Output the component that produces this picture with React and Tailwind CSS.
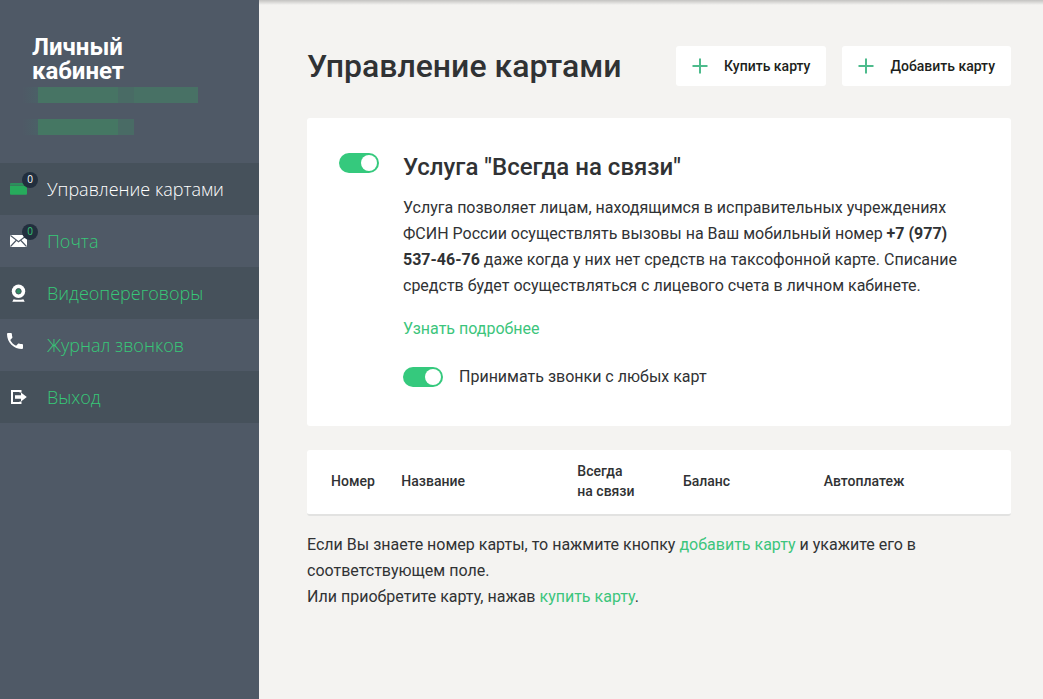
import React, { useState } from "react";

function CardIcon() {
  return (
    <svg viewBox="0 0 18 14" className="block h-[14px] w-[18px]" aria-hidden="true">
      <path d="M1 1h16v2H0V2a1 1 0 0 1 1-1z" fill="#2c8f5c" />
      <path d="M0 3.500h17v8.300a1 1 0 0 1-1 1H1a1 1 0 0 1-1-1z" fill="#27ab5c" />
    </svg>
  );
}

function MailIcon() {
  return (
    <svg viewBox="0 0 18 14" className="block h-[14px] w-[18px]" aria-hidden="true">
      <rect x="0" y="1" width="17" height="12" rx="0.800" fill="#fff" />
      <path d="M0.500 1.500l8 6.300 8-6.300M0.500 12.500l5.600-6M16.500 12.500l-5.600-6" fill="none" stroke="#4c5764" strokeWidth="1.100" />
    </svg>
  );
}

function WebcamIcon() {
  return (
    <svg viewBox="0 0 18 18" className="block size-[18px]" aria-hidden="true">
      <circle cx="8.500" cy="7.300" r="6.700" fill="#fff" />
      <circle cx="8.500" cy="7.300" r="2.700" fill="#2f8d63" stroke="#46515b" strokeWidth="1" />
      <path d="M3.600 15.200q4.900 1 9.800 0l1.300 2.500H2.300z" fill="#fff" />
    </svg>
  );
}

function PhoneIcon() {
  return (
    <svg viewBox="3 3 18 18" className="block size-[16px]" aria-hidden="true">
      <path
        d="M6.620 10.790c1.440 2.830 3.760 5.140 6.590 6.590l2.200-2.200c.27-.27.67-.36 1.020-.24 1.120.37 2.330.57 3.570.57.55 0 1 .45 1 1V20c0 .55-.45 1-1 1-9.390 0-17-7.610-17-17 0-.55.45-1 1-1h3.500c.55 0 1 .45 1 1 0 1.250.2 2.450.57 3.570.11.35.03.74-.25 1.020l-2.200 2.200z"
        fill="#fff"
      />
    </svg>
  );
}

function ExitIcon() {
  return (
    <svg viewBox="0 0 18 16" className="block h-[16px] w-[18px]" aria-hidden="true">
      <path d="M10.500 3.500V2H2v12h8.500v-1.500" fill="none" stroke="#fff" strokeWidth="2" />
      <path d="M5 6.200h6V3.500L16.800 8 11 12.500V9.800H5z" fill="#fff" />
    </svg>
  );
}

function PlusIcon() {
  return (
    <svg viewBox="0 0 16 16" className="block size-4 shrink-0" aria-hidden="true">
      <path d="M8 0.500v15M0.500 8h15" stroke="#4dbb8c" strokeWidth="2" />
    </svg>
  );
}

const menu = [
  { label: "Управление картами", icon: CardIcon, count: 0, active: true },
  { label: "Почта", icon: MailIcon, count: 0 },
  { label: "Видеопереговоры", icon: WebcamIcon },
  { label: "Журнал звонков", icon: PhoneIcon, raised: true },
  { label: "Выход", icon: ExitIcon },
];

function MenuItem({ label, icon: Icon, count, active, raised }) {
  return (
    <li className="odd:bg-[#46515b] even:bg-[#4f5966]">
      <a
        href="#"
        className={`flex h-[52px] items-center font-['Open_Sans',sans-serif] text-lg font-light ${active ? "text-white" : "text-[#37c878]"}`}
      >
        <span className={`relative flex w-[47px] shrink-0 ${raised ? "pb-2 pl-[7px]" : "pl-[10px]"}`}>
          <Icon />
          {count !== undefined && (
            <span className="absolute -top-[10px] left-[22px] flex size-4 items-center justify-center rounded-full bg-[#222f3e] text-[10px] font-normal">
              {count}
            </span>
          )}
        </span>
        {label}
      </a>
    </li>
  );
}

function Toggle({ id, label }) {
  const [on, setOn] = useState(true);
  return (
    <span className="relative block h-5 w-10 shrink-0">
      <input
        id={id}
        type="checkbox"
        aria-label={label}
        checked={on}
        onChange={(e) => setOn(e.target.checked)}
        className="peer block h-5 w-10 cursor-pointer appearance-none rounded-full bg-[#b8bcc0] checked:bg-[#35c97d]"
      />
      <span className="pointer-events-none absolute left-0.5 top-0.5 size-4 rounded-full bg-white peer-checked:left-[22px]" />
    </span>
  );
}

function ActionButton({ children }) {
  return (
    <button
      type="button"
      className="flex h-10 cursor-pointer items-center gap-4 whitespace-nowrap rounded-[3px] bg-white px-4 text-sm font-medium text-[#1d1f20]"
    >
      <PlusIcon />
      {children}
    </button>
  );
}

export default function App() {
  return (
    <div className="relative flex min-h-screen bg-[#f4f3f1] font-[Roboto,sans-serif] text-base leading-[26px] text-[#303234]">
      <div className="pointer-events-none absolute left-[259px] right-0 top-0 h-[5px] bg-linear-to-b from-black/20 to-transparent" />
      <aside className="w-[259px] shrink-0 bg-[#4f5966]">
        <div className="h-[163px] px-8 pt-[35px]">
          <p className="w-28 text-2xl font-bold leading-6 text-white">Личный кабинет</p>
          <div className="-ml-[10px] mt-1 flex h-4">
            <div className="w-4 bg-linear-to-r from-[#4f5966] to-[#4b6067]" />
            <div className="w-20 bg-[#477464]" />
            <div className="w-4 bg-[#496b65]" />
            <div className="w-16 bg-[#487165]" />
          </div>
          <div className="-ml-[10px] mt-4 flex h-4">
            <div className="w-4 bg-linear-to-r from-[#4f5966] to-[#4b6067]" />
            <div className="w-20 bg-[#457763]" />
            <div className="w-4 bg-[#496b65]" />
          </div>
        </div>
        <nav>
          <ul>
            {menu.map((item) => (
              <MenuItem key={item.label} {...item} />
            ))}
          </ul>
        </nav>
      </aside>

      <main className="min-w-0 flex-1 pl-12 pr-8 pt-[46px]">
        <header className="flex items-center justify-between">
          <h1 className="whitespace-nowrap text-[32px] font-medium leading-10">Управление картами</h1>
          <div className="flex gap-4">
            <ActionButton>Купить карту</ActionButton>
            <ActionButton>Добавить карту</ActionButton>
          </div>
        </header>

        <section className="mt-8 flex gap-6 rounded-[3px] bg-white px-8 pb-9 pt-[35px]">
          <Toggle id="always" label="Услуга &quot;Всегда на связи&quot;" />
          <div className="min-w-0 flex-1">
            <h2 className="text-2xl font-medium leading-7">Услуга "Всегда на связи"</h2>
            <p className="mt-[14px] max-w-[560px]">
              Услуга позволяет лицам, находящимся в исправительных учреждениях ФСИН России осуществлять
              вызовы на Ваш мобильный номер <strong className="font-bold">+7 (977) 537-46-76</strong> даже
              когда у них нет средств на таксофонной карте. Списание средств будет осуществляться с
              лицевого счета в личном кабинете.
            </p>
            <p className="mt-[17px]">
              <a href="#" className="text-[#3cc57c]">Узнать подробнее</a>
            </p>
            <div className="mt-[22px] flex items-center gap-4">
              <Toggle id="any" />
              <label htmlFor="any">Принимать звонки с любых карт</label>
            </div>
          </div>
        </section>

        <table className="mt-6 w-full table-fixed border-separate border-spacing-0 text-left text-sm leading-5">
          <thead>
            <tr className="*:h-[66px] *:border-b-2 *:border-[#e2e2e1] *:bg-white *:pb-0.5 *:font-medium">
              <th scope="col" className="w-[13.4%] rounded-l-[3px] pl-6">Номер</th>
              <th scope="col" className="w-[25%]">Название</th>
              <th scope="col" className="w-[15%]">Всегда<br />на связи</th>
              <th scope="col" className="w-[20%]">Баланс</th>
              <th scope="col" className="rounded-r-[3px]">Автоплатеж</th>
            </tr>
          </thead>
        </table>

        <p className="mt-4 max-w-[640px]">
          Если Вы знаете номер карты, то нажмите кнопку{" "}
          <a href="#" className="text-[#3cc57c]">добавить карту</a> и укажите его в соответствующем поле.
          <br />
          Или приобретите карту, нажав <a href="#" className="text-[#3cc57c]">купить карту</a>.
        </p>
      </main>
    </div>
  );
}
